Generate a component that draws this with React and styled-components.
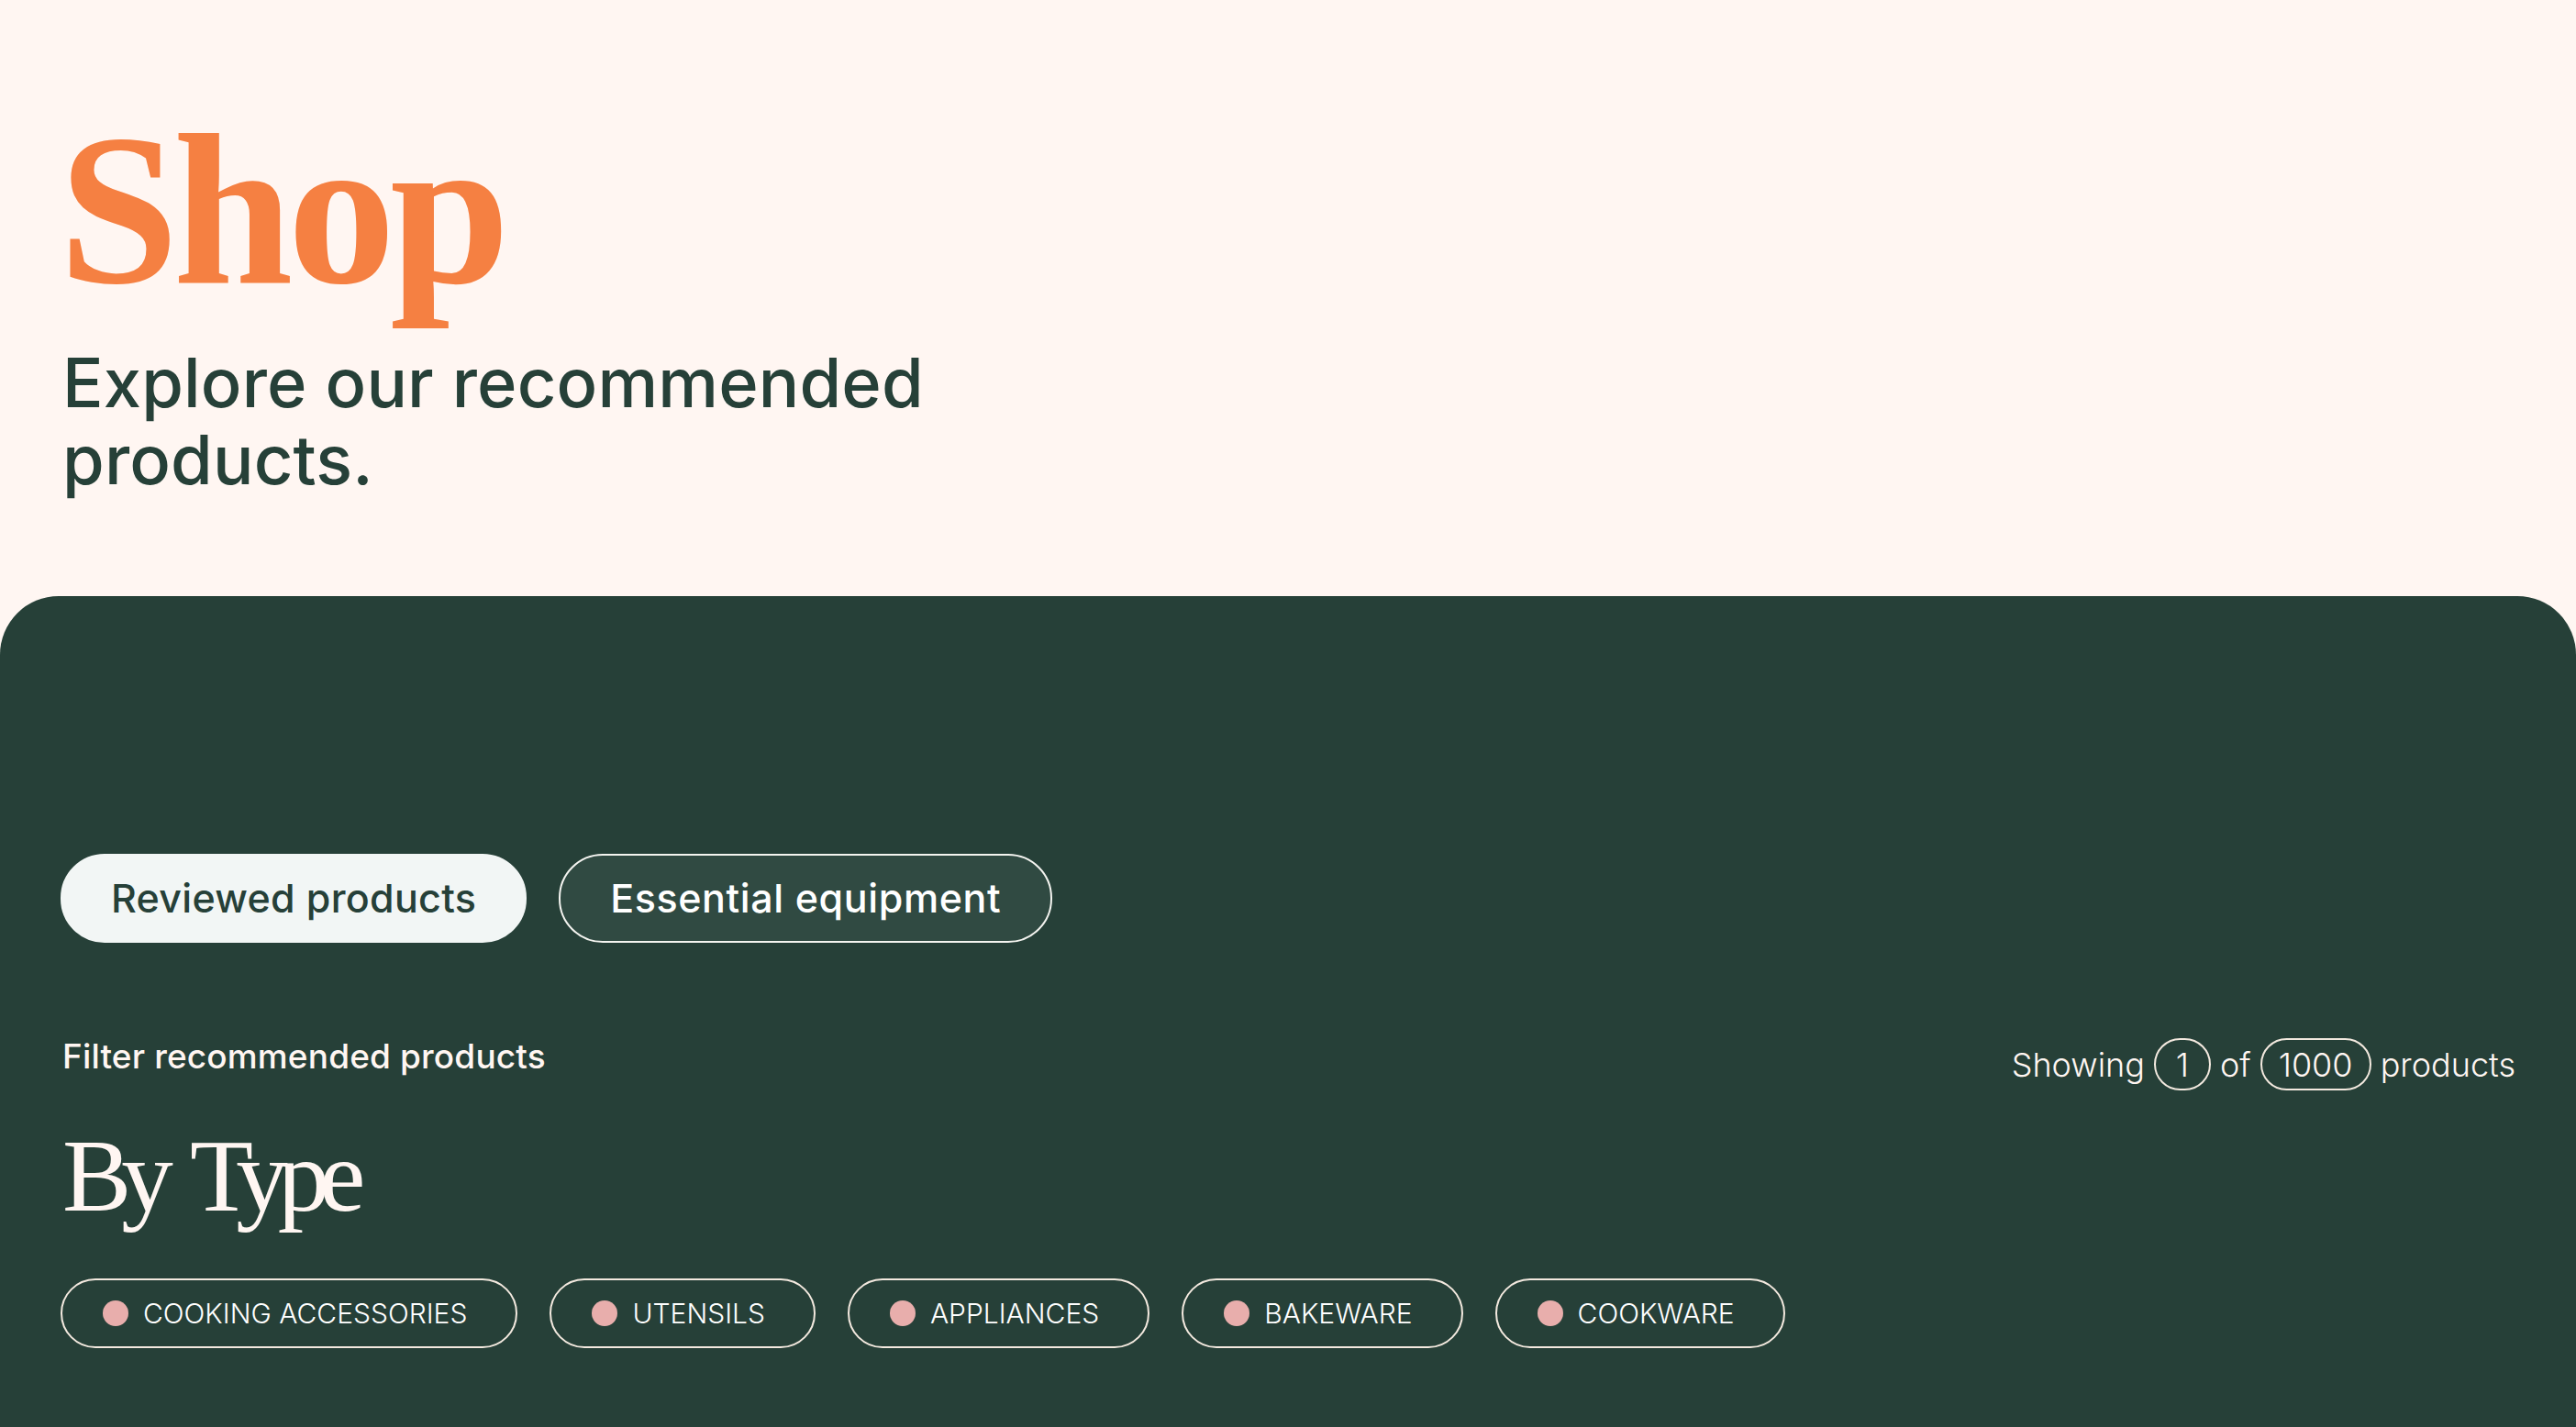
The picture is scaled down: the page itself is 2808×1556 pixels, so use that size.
import styled, { createGlobalStyle } from "styled-components";

const GlobalStyle = createGlobalStyle`
  html, body {
    margin: 0;
    padding: 0;
    background: #fff6f2;
  }
  body {
    font-family: "Inter", "Liberation Sans", sans-serif;
  }
`;

const Page = styled.div`
  display: flex;
  flex-direction: column;
  height: 1556px;
  overflow: hidden;
  background: #fff6f2;
`;

const Header = styled.header`
  height: 650px;
  box-sizing: border-box;
  padding: 95px 66px 0 64px;
`;

const Title = styled.h1`
  margin: 0;
  height: 280px;
  font-family: "Liberation Serif", serif;
  font-weight: 700;
  font-size: 235px;
  line-height: 268px;
  letter-spacing: -6px;
  color: #f58042;
`;

const Subtitle = styled.p`
  margin: 0 0 0 4px;
  width: 1000px;
  font-size: 74px;
  font-weight: 500;
  line-height: 84px;
  letter-spacing: 0.15px;
  color: #264038;
`;

const Panel = styled.main`
  flex: 1;
  box-sizing: border-box;
  padding: 281px 66px 0 66px;
  border-radius: 64px 64px 0 0;
  background: #264038;
`;

const Tabs = styled.div`
  display: flex;
  gap: 35px;
`;

const Tab = styled.button`
  box-sizing: border-box;
  height: 97px;
  padding: 0 ${(p) => (p.$active ? 53 : 54)}px 2px;
  border-radius: 48px;
  border: 2px solid ${(p) => (p.$active ? "#f2f6f5" : "#f4f4f0")};
  background: ${(p) => (p.$active ? "#f2f6f5" : "#304a42")};
  color: ${(p) => (p.$active ? "#264038" : "#ffffff")};
  font-family: inherit;
  font-size: 43px;
  font-weight: 500;
  letter-spacing: ${(p) => (p.$active ? 0.3 : 0.6)}px;
`;

const FilterRow = styled.div`
  display: flex;
  justify-content: space-between;
  align-items: flex-start;
  margin-top: 102px;
`;

const FilterBlock = styled.div`
  display: flex;
  flex-direction: column;
`;

const FilterLabel = styled.div`
  font-size: 37px;
  font-weight: 500;
  line-height: 44px;
  letter-spacing: 0.15px;
  color: #fff6f2;
  margin-left: 2px;
`;

const Heading = styled.h2`
  margin: 48px 0 0 2px;
  font-family: "Liberation Serif", serif;
  font-weight: 400;
  font-size: 113px;
  line-height: 120px;
  letter-spacing: -11px;
  word-spacing: 14px;
  color: #fff6f2;
`;

const Count = styled.div`
  display: flex;
  align-items: center;
  gap: 10px;
  margin-top: 2px;
  font-size: 36px;
  font-weight: 300;
  color: #fff6f2;
`;

const CountPill = styled.span`
  box-sizing: border-box;
  display: flex;
  align-items: center;
  justify-content: center;
  height: 57px;
  min-width: ${(p) => p.$width}px;
  border: 2px solid #f3e9df;
  border-radius: 29px;
`;

const Chips = styled.div`
  display: flex;
  gap: 35px;
  margin-top: 52px;
`;

const Chip = styled.div`
  box-sizing: border-box;
  display: flex;
  align-items: center;
  gap: 16px;
  height: 76px;
  padding: 0 53px 0 44px;
  border: 2px solid #f3e9df;
  border-radius: 38px;
  font-size: 30px;
  font-weight: 300;
  color: #ffffff;
`;

const Dot = styled.span`
  width: 28px;
  height: 28px;
  border-radius: 50%;
  background: #e8aeac;
`;

const chipLabels = ["COOKING ACCESSORIES", "UTENSILS", "APPLIANCES", "BAKEWARE", "COOKWARE"];

const App = () => {
  return (
    <Page>
      <GlobalStyle />
      <Header>
        <Title>Shop</Title>
        <Subtitle>Explore our recommended products.</Subtitle>
      </Header>
      <Panel>
        <Tabs>
          <Tab $active>Reviewed products</Tab>
          <Tab>Essential equipment</Tab>
        </Tabs>
        <FilterRow>
          <FilterBlock>
            <FilterLabel>Filter recommended products</FilterLabel>
            <Heading>By Type</Heading>
          </FilterBlock>
          <Count>
            Showing <CountPill $width={62}>1</CountPill> of <CountPill $width={121}>1000</CountPill> products
          </Count>
        </FilterRow>
        <Chips>
          {chipLabels.map((label) => (
            <Chip key={label}>
              <Dot />
              {label}
            </Chip>
          ))}
        </Chips>
      </Panel>
    </Page>
  );
};

export default App;
